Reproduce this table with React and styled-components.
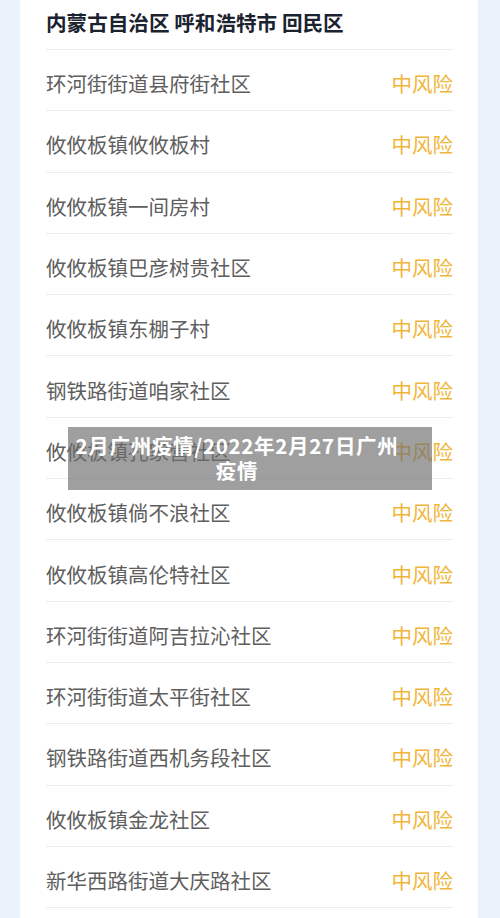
import styled, { createGlobalStyle } from "styled-components";

const GlobalStyle = createGlobalStyle`
  body {
    margin: 0;
    background: #eaf3fc;
    font-family: "Noto Sans CJK SC", "Noto Sans", sans-serif;
  }
`;

const Page = styled.div`
  position: relative;
  width: 500px;
  height: 918px;
  overflow: hidden;
`;

const Card = styled.div`
  margin: 0 22px 0 20px;
  background: #fff;
  padding: 0 25px 0 26px;
  min-height: 918px;
`;

const Region = styled.div`
  height: 50px;
  line-height: 44px;
  font-size: 20.6px;
  font-weight: 700;
  color: #1b2330;
  border-bottom: 1px solid #ececec;
  box-sizing: border-box;
  white-space: nowrap;
`;

const Row = styled.div`
  display: flex;
  align-items: center;
  justify-content: space-between;
  height: 61.3px;
  box-sizing: border-box;
  border-bottom: 1px solid #ececec;
  font-size: 20.5px;
  padding-top: 6px;
`;

const Place = styled.span`
  color: #5e5e5e;
`;

const Risk = styled.span`
  color: #f1b53a;
`;

const Caption = styled.div`
  position: absolute;
  top: 427px;
  left: 68px;
  width: 364px;
  height: 63px;
  box-sizing: border-box;
  padding: 6px 31px 0 5px;
  background: rgba(110, 110, 110, 0.66);
  color: #fff;
  font-size: 20.5px;
  font-weight: 700;
  line-height: 25px;
  text-align: center;
  letter-spacing: 0.7px;
`;

const places = [
  "环河街街道县府街社区",
  "攸攸板镇攸攸板村",
  "攸攸板镇一间房村",
  "攸攸板镇巴彦树贵社区",
  "攸攸板镇东棚子村",
  "钢铁路街道咱家社区",
  "攸攸板镇孔家营社区",
  "攸攸板镇倘不浪社区",
  "攸攸板镇高伦特社区",
  "环河街街道阿吉拉沁社区",
  "环河街街道太平街社区",
  "钢铁路街道西机务段社区",
  "攸攸板镇金龙社区",
  "新华西路街道大庆路社区",
];

export default function App() {
  return (
    <Page>
      <GlobalStyle />
      <Card>
        <Region>内蒙古自治区 呼和浩特市 回民区</Region>
        {places.map((p) => (
          <Row key={p}>
            <Place>{p}</Place>
            <Risk>中风险</Risk>
          </Row>
        ))}
      </Card>
      <Caption>2月广州疫情/2022年2月27日广州疫情</Caption>
    </Page>
  );
}
